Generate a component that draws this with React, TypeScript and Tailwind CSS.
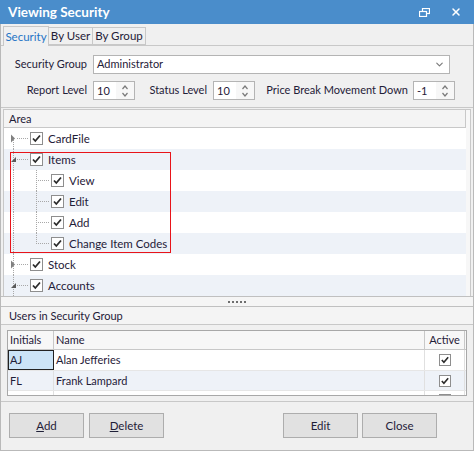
import { ChevronDown, X } from 'lucide-react';

const FONT = { fontFamily: 'Lato, "Liberation Sans", Arial, sans-serif' };

function Check({ size = 13 }: { size?: number }) {
  return (
    <span
      className="inline-flex items-center justify-center border border-[#8e8e8e] bg-white shrink-0"
      style={{ width: size, height: size }}
    >
      <svg width={size - 2} height={size - 2} viewBox="0 0 11 11">
        <polyline points="2,5.5 4.3,8 9,2.5" fill="none" stroke="#2b2b2b" strokeWidth="1.8" />
      </svg>
    </span>
  );
}

function Spin({ value }: { value: string }) {
  return (
    <div className="flex h-[19px] w-[42px] border border-[#b4b4b4] bg-white">
      <span className="flex-1 pl-[3px] leading-[17px]">{value}</span>
      <div className="flex w-[18px] flex-col items-center justify-center bg-[#f7f7f7]">
        <svg width="8" height="14" viewBox="0 0 8 14">
          <polyline points="1.5,5 4,2 6.5,5" fill="none" stroke="#7a7a7a" strokeWidth="1.2" />
          <polyline points="1.5,9 4,12 6.5,9" fill="none" stroke="#7a7a7a" strokeWidth="1.2" />
        </svg>
      </div>
    </div>
  );
}

type Row = { label: string; level: 0 | 1; kind: 'closed' | 'open' | 'leaf'; last?: boolean; first?: boolean; alt: boolean };

function Gutter({ row }: { row: Row }) {
  const dot = { stroke: '#a8a8a8', strokeWidth: 1, strokeDasharray: '1 1' };
  if (row.level === 0) {
    return (
      <svg width="26" height="21" className="shrink-0">
        <line x1="9.5" y1={row.first ? 10 : 0} x2="9.5" y2="21" {...dot} />
        <line x1="13" y1="10.5" x2="25" y2="10.5" {...dot} />
        {row.kind === 'closed' && <polygon points="7,6.5 11,10.5 7,14.5" fill="#808080" />}
        {row.kind === 'open' && <polygon points="12,8 12,13 7,13" fill="#5a5a5a" />}
      </svg>
    );
  }
  return (
    <svg width="47" height="21" className="shrink-0">
      <line x1="9.5" y1="0" x2="9.5" y2="21" {...dot} />
      <line x1="32.5" y1="0" x2="32.5" y2={row.last ? 11 : 21} {...dot} />
      <line x1="34" y1="10.5" x2="46" y2="10.5" {...dot} />
    </svg>
  );
}

const TOP: Row[] = [{ label: 'CardFile', level: 0, kind: 'closed', first: true, alt: false }];
const BOXED: Row[] = [
  { label: 'Items', level: 0, kind: 'open', alt: true },
  { label: 'View', level: 1, kind: 'leaf', alt: false },
  { label: 'Edit', level: 1, kind: 'leaf', alt: true },
  { label: 'Add', level: 1, kind: 'leaf', alt: false },
  { label: 'Change Item Codes', level: 1, kind: 'leaf', last: true, alt: true },
];
const BOTTOM: Row[] = [
  { label: 'Stock', level: 0, kind: 'closed', alt: false },
  { label: 'Accounts', level: 0, kind: 'open', alt: true },
];

function TreeRow({ row }: { row: Row }) {
  return (
    <div className={`flex h-[21px] items-center ${row.alt ? 'bg-[#eef2f8]' : 'bg-white'}`}>
      <Gutter row={row} />
      <Check />
      <span className="ml-[5px] text-[11.5px]">{row.label}</span>
    </div>
  );
}

function Button({ children }: { children: React.ReactNode }) {
  return (
    <button className="h-[25px] w-[75px] border border-[#adadad] bg-[#e1e1e1] text-[11.5px] text-[#1f2038]">
      {children}
    </button>
  );
}

export default function App() {
  return (
    <div className="h-[451px] w-[474px] overflow-hidden whitespace-nowrap bg-[#f0f0f0] text-[11px] text-[#1f2038]" style={FONT}>
      {/* title bar */}
      <div className="flex h-[24px] items-center bg-[#4a8dcb] pl-[8px] pr-[12px] text-white">
        <span className="text-[13.5px] font-bold">Viewing Security</span>
        <div className="ml-auto flex items-center gap-[20px]">
          <svg width="11" height="9" viewBox="0 0 11 9">
            <rect x="3.5" y="0.5" width="7" height="5" fill="none" stroke="white" strokeWidth="1.2" />
            <rect x="0.5" y="3.5" width="7" height="5" fill="#4a8dcb" stroke="white" strokeWidth="1.2" />
          </svg>
          <X className="h-[12px] w-[12px]" strokeWidth={3} />
        </div>
      </div>

      <div className="h-[427px] border-x border-b border-[#b9b9b9]">
        {/* tabs */}
        <div className="flex h-[21px] items-end pl-[2px] text-[11.5px]">
          <div className="relative z-10 -mb-px flex h-[20px] w-[46px] items-center justify-center border border-b-0 border-[#c8c8c8] bg-[#f0f0f0] text-[#1f74c6]">
            Security
          </div>
          <div className="flex h-[18px] w-[44px] items-center justify-center border-y border-r border-[#c8c8c8]">By User</div>
          <div className="flex h-[18px] w-[53px] items-center justify-center border-y border-r border-[#c8c8c8]">By Group</div>
        </div>

        {/* tab panel */}
        <div className="h-[63px] border-y border-[#c8c8c8] pt-[9px]">
          <div className="flex items-center">
            <span className="w-[86px] text-right">Security Group</span>
            <div className="ml-[6px] flex h-[19px] w-[357px] items-center border border-[#b4b4b4] bg-white pl-[3px]">
              <span>Administrator</span>
              <ChevronDown className="ml-auto mr-[4px] h-[11px] w-[11px] text-[#7a7a7a]" strokeWidth={2.5} />
            </div>
          </div>
          <div className="mt-[7px] flex items-center">
            <span className="w-[86px] text-right">Report Level</span>
            <div className="ml-[6px]"><Spin value="10" /></div>
            <span className="w-[72px] text-right">Status Level</span>
            <div className="ml-[6px]"><Spin value="10" /></div>
            <span className="w-[153px] text-right">Price Break Movement Down</span>
            <div className="ml-[5px]"><Spin value="-1" /></div>
          </div>
        </div>

        {/* tree */}
        <div className="mx-[2px] mt-[1px] border-x border-t border-[#c8c8c8] bg-[#f7f7f7]">
          <div className="mr-[4px] h-[18px] border-b border-r border-[#c8c8c8] bg-[#f4f4f4] pl-[5px] leading-[17px]">Area</div>
          <div className="mr-[4px]">
            {TOP.map((r) => <TreeRow key={r.label} row={r} />)}
            <div className="relative">
              {BOXED.map((r) => <TreeRow key={r.label} row={r} />)}
              <div className="pointer-events-none absolute left-[6px] top-[3px] h-[101px] w-[161px] border border-[#e8141a]" />
            </div>
            {BOTTOM.map((r) => <TreeRow key={r.label} row={r} />)}
          </div>
        </div>

        {/* splitter */}
        <div className="flex h-[11px] items-center justify-center gap-[2px] border-y border-[#c0c0c0] bg-[#f5f5f5]">
          {[0, 1, 2, 3, 4].map((i) => (
            <span key={i} className="h-[2px] w-[2px] bg-[#6e6e6e]" />
          ))}
        </div>

        {/* users group */}
        <div className="h-[18px] border-b border-[#c8c8c8] bg-[#f4f4f4] pl-[8px] leading-[17px]">Users in Security Group</div>
        <div className="h-[77px] border-b border-[#c8c8c8] px-[6px] pt-[5px]">
          <div className="h-[66px] overflow-hidden border border-[#a8a8a8] bg-white">
            <div className="flex h-[19px] border-b border-[#c8c8c8] bg-[#f7f7f7]">
              <div className="w-[46px] border-r border-[#c8c8c8] pl-[2px] leading-[18px]">Initials</div>
              <div className="w-[371px] border-r border-[#c8c8c8] pl-[2px] leading-[18px]">Name</div>
              <div className="w-[40px] border-r border-[#c8c8c8] text-center leading-[18px]">Active</div>
            </div>
            <div className="flex h-[20px] bg-white">
              <div className="w-[46px] border border-[#222] bg-[#cce4f7] pl-[1px] leading-[18px]">AJ</div>
              <div className="w-[371px] border-r border-[#e0e0e0] pl-[2px] leading-[20px]">Alan Jefferies</div>
              <div className="flex w-[40px] items-center justify-center border-r border-[#e0e0e0]"><Check size={12} /></div>
            </div>
            <div className="flex h-[20px] border-t border-[#e6e6e6] bg-[#eef2f8]">
              <div className="w-[46px] border-r border-[#e0e0e0] pl-[2px] leading-[19px]">FL</div>
              <div className="w-[371px] border-r border-[#e0e0e0] pl-[2px] leading-[19px]">Frank Lampard</div>
              <div className="flex w-[40px] items-center justify-center border-r border-[#e0e0e0]"><Check size={12} /></div>
            </div>
            <div className="flex h-[20px] border-t border-[#e6e6e6] bg-white">
              <div className="w-[46px] border-r border-[#e0e0e0]" />
              <div className="w-[371px] border-r border-[#e0e0e0]" />
              <div className="flex w-[40px] justify-center border-r border-[#e0e0e0] pt-[3px]"><Check size={12} /></div>
            </div>
          </div>
        </div>

        {/* buttons */}
        <div className="flex px-[8px] pt-[11px]">
          <Button><span className="underline">A</span>dd</Button>
          <div className="ml-[5px]"><Button><span className="underline">D</span>elete</Button></div>
          <div className="ml-auto mr-[28px] flex gap-[4px]">
            <Button>Edit</Button>
            <Button>Close</Button>
          </div>
        </div>
      </div>
    </div>
  );
}
